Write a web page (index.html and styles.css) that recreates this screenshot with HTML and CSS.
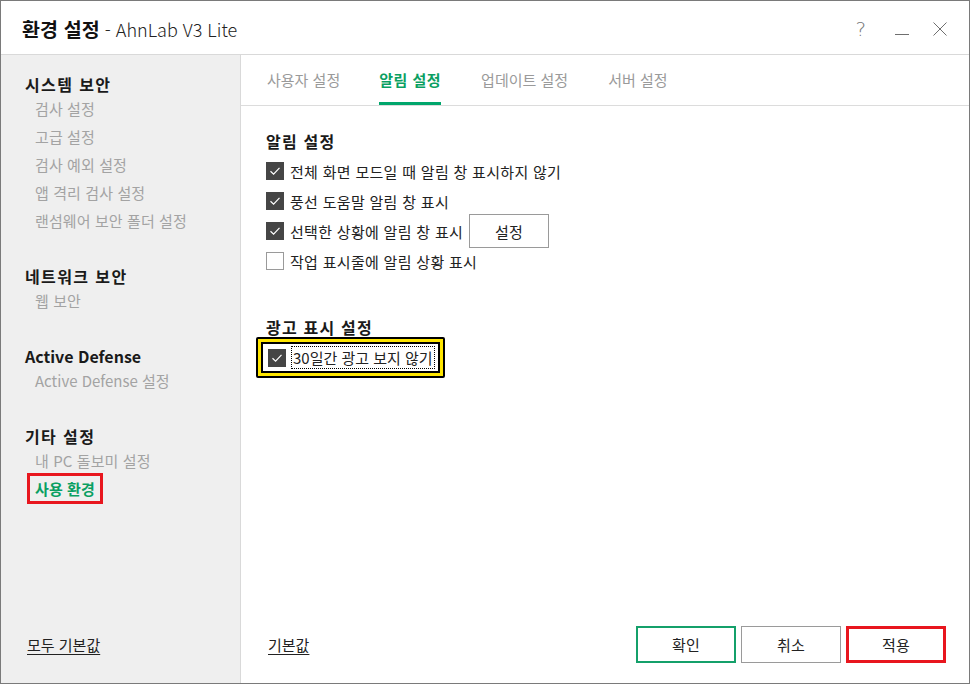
FILE: index.html
```html
<!DOCTYPE html>
<html lang="ko">
<head>
<meta charset="utf-8">
<title>환경 설정 - AhnLab V3 Lite</title>
<link rel="stylesheet" href="styles.css">
</head>
<body>
<div class="window">
  <header class="titlebar">
    <div class="title"><b>환경 설정</b><span class="app"> - AhnLab V3 Lite</span></div>
    <div class="controls">
      <span class="ctl help">?</span>
      <svg class="ctl" width="16" height="16" viewBox="0 0 16 16"><line x1="1" y1="13.5" x2="15" y2="13.5" stroke="#6f6f6f" stroke-width="1"/></svg>
      <svg class="ctl" width="16" height="16" viewBox="0 0 16 16"><path d="M1.5 1.5L14.5 14.5M14.5 1.5L1.5 14.5" stroke="#6f6f6f" stroke-width="1" fill="none"/></svg>
    </div>
  </header>
  <div class="main">
    <aside class="sidebar">
      <div class="group">
        <div class="gh">시스템 보안</div>
        <div class="gi">검사 설정</div>
        <div class="gi">고급 설정</div>
        <div class="gi">검사 예외 설정</div>
        <div class="gi">앱 격리 검사 설정</div>
        <div class="gi">랜섬웨어 보안 폴더 설정</div>
      </div>
      <div class="group">
        <div class="gh">네트워크 보안</div>
        <div class="gi">웹 보안</div>
      </div>
      <div class="group">
        <div class="gh latin">Active Defense</div>
        <div class="gi latin">Active Defense 설정</div>
      </div>
      <div class="group">
        <div class="gh">기타 설정</div>
        <div class="gi">내 PC 돌보미 설정</div>
        <div class="gi"><span class="current">사용 환경</span></div>
      </div>
      <div class="side-foot"><a class="link">모두 기본값</a></div>
    </aside>
    <section class="content">
      <nav class="tabs">
        <span class="tab">사용자 설정</span>
        <span class="tab active">알림 설정</span>
        <span class="tab">업데이트 설정</span>
        <span class="tab">서버 설정</span>
      </nav>
      <div class="body">
        <h2 class="sh">알림 설정</h2>
        <div class="rows">
          <label class="row"><span class="cb on"><svg width="18" height="18" viewBox="0 0 18 18"><path d="M4.5 9.2L7.6 12.2L13.5 5.8" stroke="#fff" stroke-width="1.2" fill="none"/></svg></span>전체 화면 모드일 때 알림 창 표시하지 않기</label>
          <label class="row"><span class="cb on"><svg width="18" height="18" viewBox="0 0 18 18"><path d="M4.5 9.2L7.6 12.2L13.5 5.8" stroke="#fff" stroke-width="1.2" fill="none"/></svg></span>풍선 도움말 알림 창 표시</label>
          <label class="row"><span class="cb on"><svg width="18" height="18" viewBox="0 0 18 18"><path d="M4.5 9.2L7.6 12.2L13.5 5.8" stroke="#fff" stroke-width="1.2" fill="none"/></svg></span>선택한 상황에 알림 창 표시<button class="btn set">설정</button></label>
          <label class="row"><span class="cb"></span>작업 표시줄에 알림 상황 표시</label>
        </div>
        <h2 class="sh ad">광고 표시 설정</h2>
        <div class="hl">
          <div class="hl-in">
            <span class="cb on"><svg width="18" height="18" viewBox="0 0 18 18"><path d="M4.5 9.2L7.6 12.2L13.5 5.8" stroke="#fff" stroke-width="1.2" fill="none"/></svg></span>
            <span class="focus">30일간 광고 보지 않기</span>
          </div>
        </div>
      </div>
      <div class="foot">
        <a class="link">기본값</a>
        <div class="btns">
          <button class="btn ok">확인</button>
          <button class="btn cancel">취소</button>
          <button class="btn apply">적용</button>
        </div>
      </div>
    </section>
  </div>
</div>
</body>
</html>
```
FILE: styles.css
```css
* { box-sizing: border-box; }
html, body { margin: 0; padding: 0; background: #fff; }
body {
  font-family: "Noto Sans CJK KR", "Noto Sans", sans-serif;
  color: #222;
}
.window {
  width: 970px;
  height: 684px;
  border: 1px solid #7a7a7a;
  display: flex;
  flex-direction: column;
  background: #fff;
}
.titlebar {
  height: 54px;
  flex: none;
  border-bottom: 1px solid #d9d9d9;
  display: flex;
  align-items: center;
  justify-content: space-between;
  padding: 3px 0 0 21px;
}
.title { line-height: 26px; color: #111; }
.title b { font-weight: 700; font-size: 19.5px; letter-spacing: 0.1px; }
.title .app { font-weight: 300; font-size: 18px; color: #222; }
.controls { display: flex; align-items: center; padding-right: 21px; gap: 22px; }
.ctl { display: block; }
.help {
  font-family: "DejaVu Sans", sans-serif;
  font-weight: 300;
  font-size: 20px;
  color: #777;
  line-height: 20px;
  margin-right: 6px;
}
.main { flex: 1; display: flex; min-height: 0; }
.sidebar {
  width: 240px;
  flex: none;
  background: #efefef;
  border-right: 1px solid #d9d9d9;
  display: flex;
  flex-direction: column;
  padding: 18px 0 0 24px;
}
.group { margin-bottom: 30px; }
.gh { font-size: 16px; font-weight: 700; line-height: 22px; color: #1a1a1a; letter-spacing: 1.4px; }
.gh.latin { letter-spacing: 0; }
.gi { font-size: 15px; line-height: 28px; color: #a3a3a3; padding-left: 10px; letter-spacing: 0.1px; }
.gi.latin { letter-spacing: 0; }
.current {
  display: inline-block;
  color: #0a9f62;
  font-weight: 700;
  border: 3px solid #e8161e;
  padding: 0 5px;
  margin-left: -8px;
  margin-top: -2px;
  line-height: 25px;
}
.side-foot {
  margin-top: auto;
  height: 37px;
  margin-bottom: 20px;
  display: flex;
  align-items: center;
  padding-left: 2px;
}
.link {
  font-size: 15px;
  color: #222;
  text-decoration: underline;
  text-underline-offset: 3px;
  line-height: 20px;
}
.content { flex: 1; display: flex; flex-direction: column; }
.tabs {
  height: 51px;
  flex: none;
  border-bottom: 1px solid #dcdcdc;
  display: flex;
  gap: 40px;
  padding-left: 26px;
}
.tab {
  font-size: 15px;
  color: #9a9a9a;
  line-height: 20px;
  padding-top: 15px;
  height: 50px;
  border-bottom: 3px solid transparent;
}
.tab:first-child { margin-right: -1px; }
.tab.active { color: #0a9f62; font-weight: 700; border-bottom-color: #00a66c; letter-spacing: 0.5px; }
.body { padding: 25px 0 0 25px; }
.sh { margin: 0; font-size: 16px; font-weight: 700; line-height: 20px; color: #1a1a1a; letter-spacing: 1.2px; }
.rows { margin-top: 5px; }
.row {
  display: flex;
  align-items: center;
  height: 30px;
  font-size: 15px;
  color: #222;
  gap: 6px;
  letter-spacing: 0.3px;
}
.cb {
  width: 18px;
  height: 18px;
  flex: none;
  border: 1px solid #9a9a9a;
  background: #fff;
  display: block;
}
.cb.on { background: #454545; border: none; }
.cb svg { display: block; }
.btn {
  font-family: "Noto Sans CJK KR", "Noto Sans", sans-serif;
  font-size: 15px;
  color: #222;
  background: #fff;
  border: 1px solid #9a9a9a;
  width: 100px;
  height: 37px;
  padding: 0;
  cursor: default;
  letter-spacing: 0.3px;
}
.btn.set { width: 80px; height: 34px; margin-left: 0; }
.sh.ad { margin-top: 41px; }
.hl {
  display: inline-block;
  margin-left: -10px;
  border: 2px solid #000;
  border-radius: 2px;
  background: #ffe600;
  padding: 3px;
}
.hl-in {
  border: 2px solid #000;
  background: #fff;
  display: flex;
  align-items: center;
  gap: 5px;
  padding: 2px 3px 2px 5px;
}
.focus {
  font-size: 15px;
  line-height: 21px;
  border: 1px dotted #000;
  padding: 0 1px;
  letter-spacing: 0;
}
.foot {
  margin-top: auto;
  margin-bottom: 20px;
  display: flex;
  align-items: center;
  justify-content: space-between;
  padding: 0 23px 0 27px;
}
.btns { display: flex; gap: 5px; }
.btn.ok { border: 2px solid #14a06a; }
.btn.cancel { border: 1px solid #9a9a9a; }
.btn.apply { border: 3px solid #e8161e; }
```
